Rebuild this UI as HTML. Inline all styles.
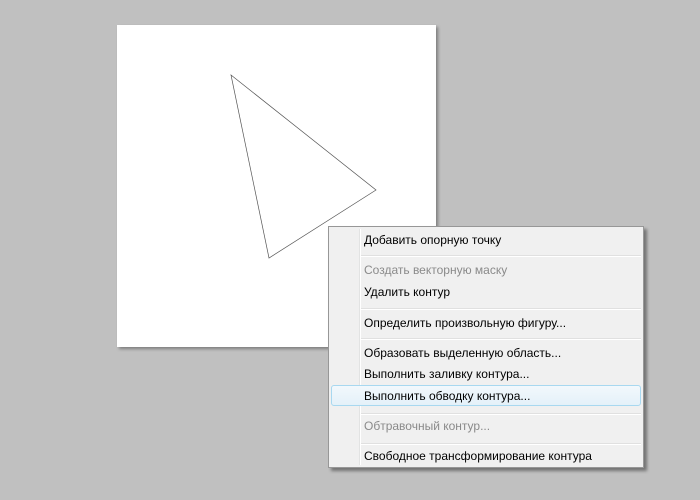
<!DOCTYPE html><html><head><style>
body{margin:0;width:700px;height:500px;background:#c0c0c0;position:relative;overflow:hidden;font-family:"Liberation Sans",sans-serif}
.cv{position:absolute;left:117px;top:25px;width:319px;height:322px;background:#fff;box-shadow:2px 2px 3px rgba(0,0,0,.35)}
.m{position:absolute;left:328px;top:226px;width:316px;height:242px;background:#f0f0f0;border:1px solid #979797;box-shadow:3px 3px 3px rgba(0,0,0,.4);box-sizing:border-box}
.g{position:absolute;left:30px;top:2px;bottom:2px;width:1px;background:#e2e3e3;border-right:1px solid #fff}
.i{position:absolute;left:35px;font-size:12px;color:#000;line-height:14px}
.d{color:#8a8a8a}
.s{position:absolute;left:32px;right:2px;height:1px;background:#e0e0e0;border-bottom:1px solid #fff}
.h{position:absolute;left:2px;right:2px;top:158px;height:21px;border:1px solid #a8d8f0;border-radius:3px;background:linear-gradient(#f2f8fc,#e4f1f9);box-sizing:border-box}
</style></head><body>
<div class="cv"></div>
<svg style="position:absolute;left:0;top:0" width="700" height="500"><polygon points="231,75 376,190 269,258" fill="none" stroke="#555" stroke-width="0.7"/></svg>
<div class="m"><div class="g"></div>
<div class="h"></div>
<div class="i" style="top:6px">Добавить опорную точку</div>
<div class="s" style="top:28px"></div>
<div class="i d" style="top:36px">Создать векторную маску</div>
<div class="i" style="top:58px">Удалить контур</div>
<div class="s" style="top:81px"></div>
<div class="i" style="top:89px">Определить произвольную фигуру...</div>
<div class="s" style="top:111px"></div>
<div class="i" style="top:119px">Образовать выделенную область...</div>
<div class="i" style="top:140px">Выполнить заливку контура...</div>
<div class="i" style="top:162px">Выполнить обводку контура...</div>
<div class="s" style="top:186px"></div>
<div class="i d" style="top:192px">Обтравочный контур...</div>
<div class="s" style="top:216px"></div>
<div class="i" style="top:222px">Свободное трансформирование контура</div>
</div>
</body></html>
